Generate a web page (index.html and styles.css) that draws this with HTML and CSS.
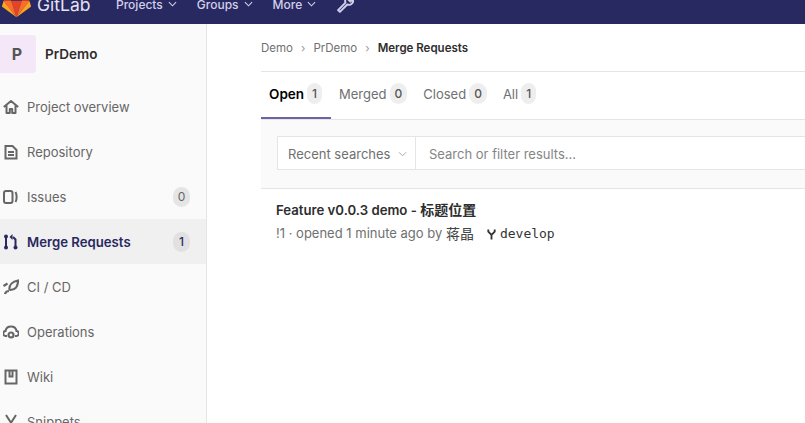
FILE: index.html
```html
<!DOCTYPE html>
<html lang="en">
<head>
<meta charset="utf-8">
<title>Merge Requests · PrDemo</title>
<link rel="stylesheet" href="styles.css">
</head>
<body>
<header class="topbar">
  <div class="topbar-inner">
    <svg class="logo" viewBox="0 0 36 34" width="29" height="28"><path fill="#e24329" d="M18 33.500 24.600 13H11.400z"/><path fill="#fc6d26" d="M18 33.500 11.400 13H2.100z"/><path fill="#fca326" d="M2.100 13 .1 19.200c-.2.600 0 1.200.5 1.600L18 33.500z"/><path fill="#e24329" d="M2.100 13h9.300L7.400.7c-.2-.6-1.100-.6-1.300 0z"/><path fill="#fc6d26" d="M18 33.500 24.600 13h9.300z"/><path fill="#fca326" d="m33.900 13 2 6.200c.2.600 0 1.200-.5 1.600L18 33.500z"/><path fill="#e24329" d="M33.900 13h-9.300l4-12.300c.2-.6 1.100-.6 1.300 0z"/></svg>
    <span class="brand">GitLab</span>
    <nav class="menu">
      <a class="menu-item">Projects<svg class="chev" viewBox="0 0 10 6" width="9" height="6"><path d="M1 1l4 4 4-4" fill="none" stroke="currentColor" stroke-width="1.200"/></svg></a>
      <a class="menu-item">Groups<svg class="chev" viewBox="0 0 10 6" width="9" height="6"><path d="M1 1l4 4 4-4" fill="none" stroke="currentColor" stroke-width="1.200"/></svg></a>
      <a class="menu-item">More<svg class="chev" viewBox="0 0 10 6" width="9" height="6"><path d="M1 1l4 4 4-4" fill="none" stroke="currentColor" stroke-width="1.200"/></svg></a>
      <svg class="wrench" viewBox="0 0 16 16" width="17" height="17"><path d="M2.700 15 1 13.300l7-7c-.7-1.800-.2-3.300.8-4.300C9.900.9 11.500.5 13 1.100L10.700 3.400l1.900 1.900L14.900 3c.6 1.500.2 3.100-.9 4.200-1 1-2.500 1.500-4.300.8z" fill="none" stroke="currentColor" stroke-width="1.800" stroke-linejoin="round"/></svg>
    </nav>
  </div>
</header>
<div class="layout">
  <aside class="sidebar">
    <div class="context">
      <div class="avatar">P</div>
      <div class="project">PrDemo</div>
    </div>
    <ul class="nav">
      <li class="nav-item"><svg class="ico" viewBox="0 0 16 16"><path d="M.8 8 8 2l7.200 6M3.500 6.500V14h3.300v-4h2.400v4h3.300V6.500" fill="none" stroke="currentColor" stroke-width="2" stroke-linejoin="round"/></svg><span>Project overview</span></li>
      <li class="nav-item"><svg class="ico" viewBox="0 0 16 16"><path d="M2.500 2h7L13.500 6v8.500h-11zM5 8h6M5 11h6" fill="none" stroke="currentColor" stroke-width="2"/></svg><span>Repository</span></li>
      <li class="nav-item"><svg class="ico" viewBox="0 0 16 16"><rect x="1" y="2" width="8.500" height="12" rx="2" fill="none" stroke="currentColor" stroke-width="2"/><path d="M12.500 3c1.500 2.500 1.500 7.500 0 10" fill="none" stroke="currentColor" stroke-width="2"/></svg><span>Issues</span><b class="count">0</b></li>
      <li class="nav-item active"><svg class="ico" viewBox="0 0 16 16"><path d="M3 3v10M12.500 13V5.500L10 3" fill="none" stroke="currentColor" stroke-width="2"/><path d="M9.500 0v6L6.500 3z" fill="currentColor"/><circle cx="3" cy="2.500" r="2" fill="currentColor"/><circle cx="3" cy="13.500" r="2" fill="currentColor"/><circle cx="12.500" cy="13.500" r="2" fill="currentColor"/></svg><span>Merge Requests</span><b class="count">1</b></li>
      <li class="nav-item"><svg class="ico" viewBox="0 0 16 16"><path d="M6.500 10.500C6 6 9.500 2.500 15 1.500c0 6-3 9.500-7.500 9.500zM.5 7 4.500 4.500M2 15c.5-2 2-3 4-3" fill="none" stroke="currentColor" stroke-width="2.200"/></svg><span>CI / CD</span></li>
      <li class="nav-item"><svg class="ico" viewBox="0 0 16 16"><path d="M4 12H3a2.500 2.500 0 0 1-.5-5C3 4 5.500 2.500 8 2.500s5 1.500 5.500 4.500a2.500 2.500 0 0 1-.5 5h-1" fill="none" stroke="currentColor" stroke-width="2"/><circle cx="8" cy="11" r="2.500" fill="none" stroke="currentColor" stroke-width="2.200"/></svg><span>Operations</span></li>
      <li class="nav-item"><svg class="ico" viewBox="0 0 16 16"><path d="M2.500 1.500h11v13h-11zM6.500 2v5.500h3V2" fill="none" stroke="currentColor" stroke-width="2"/></svg><span>Wiki</span></li>
      <li class="nav-item"><svg class="ico" viewBox="0 0 16 16"><path d="M3 1l9 14M13 1 4 15" fill="none" stroke="currentColor" stroke-width="2"/></svg><span>Snippets</span></li>
    </ul>
  </aside>
  <main class="content">
    <div class="crumbs">
      <span>Demo</span><i class="sep">›</i><span>PrDemo</span><i class="sep">›</i><strong>Merge Requests</strong>
    </div>
    <div class="tabs">
      <a class="tab current">Open <b class="pill">1</b></a>
      <a class="tab">Merged <b class="pill">0</b></a>
      <a class="tab">Closed <b class="pill">0</b></a>
      <a class="tab">All <b class="pill">1</b></a>
    </div>
    <div class="filter-band">
      <div class="filter">
        <div class="recent">Recent searches<svg class="chev-gray" viewBox="0 0 10 6" width="9" height="6"><path d="M1 1l4 4 4-4" fill="none" stroke="currentColor" stroke-width="1.100"/></svg></div>
        <div class="search">Search or filter results...</div>
      </div>
    </div>
    <div class="mr">
      <div class="mr-title">Feature v0.0.3 demo - <span class="cjk">标题位置</span></div>
      <div class="mr-meta">!1 · opened 1 minute ago by <span class="author">蒋晶</span><svg class="fork" viewBox="0 0 12 12" width="11" height="12"><path d="M2.500 1v2.500L6 7l3.500-3.500V1M6 7v5" fill="none" stroke="currentColor" stroke-width="2"/></svg><code class="ref">develop</code></div>
    </div>
  </main>
</div>
</body>
</html>
```
FILE: styles.css
```css
* { box-sizing: border-box; }
html, body { margin: 0; height: 423px; overflow: hidden; background: #fff; }
body { font-family: Inter, "Noto Sans CJK SC", sans-serif; font-size: 13px; color: #2e2e2e; display: flex; flex-direction: column; }
.topbar { height: 24px; flex: none; background: #292961; overflow: hidden; color: #d1d0ea; }
.topbar-inner { display: flex; align-items: center; height: 48px; margin-top: -20px; }
.logo { margin-left: 2px; flex: none; }
.brand { font-size: 17.500px; margin-left: 6px; color: #e4e3f2; width: 79px; }
.menu { display: flex; align-items: center; gap: 20px; }
.menu-item { display: flex; align-items: center; gap: 5px; font-size: 12px; font-weight: 500; }
.wrench { margin-left: 1px; }
.layout { display: flex; flex: 1; min-height: 0; }
.sidebar { width: 207px; flex: none; background: #fafafa; border-right: 1px solid #e5e5e5; overflow: hidden; }
.context { display: flex; align-items: center; height: 38px; margin: 11px 0 0 -4px; }
.avatar { width: 40px; height: 38px; border-radius: 3px; background: #f4e8f8; color: #555; display: flex; align-items: center; justify-content: center; font-size: 16px; font-weight: 700; padding-left: 2px; }
.project { margin-left: 9px; font-size: 13.500px; font-weight: 600; color: #2e2e2e; }
.nav { list-style: none; margin: 11px 0 0; padding: 0; }
.nav-item { display: flex; align-items: center; height: 45px; padding: 0 16px 0 3px; color: #666; font-size: 13px; }
.ico { width: 16px; height: 16px; margin-right: 8px; flex: none; }
.count { margin-left: auto; min-width: 17px; height: 20px; border-radius: 10px; background: #e5e5e5; color: #666; font-size: 12px; font-weight: 400; display: flex; align-items: center; justify-content: center; }
.active { background: #f0f0f0; color: #292961; font-weight: 600; font-size: 13.200px; }
.active .count { background: #e1e1e1; color: #292961; font-weight: 500; }
.content { flex: 1; min-width: 0; padding-left: 54px; overflow: hidden; }
.crumbs { height: 48px; border-bottom: 1px solid #e5e5e5; display: flex; align-items: center; font-size: 11.500px; color: #707070; }
.crumbs strong { color: #2e2e2e; font-weight: 600; }
.sep { font-style: normal; margin: 0 8px; color: #999; }
.tabs { display: flex; height: 48px; border-bottom: 1px solid #e5e5e5; }
.tab { display: flex; align-items: center; gap: 3px; padding: 0 8px 4px; color: #707070; font-size: 13px; height: 47px; }
.current { color: #000; font-weight: 600; font-size: 13.500px; padding: 0 9px 2px 8px; border-bottom: 2px solid #6b65a7; }
.pill { padding: 0 5px; height: 21px; border-radius: 10px; background: #eee; color: #555; font-size: 12px; font-weight: 500; display: flex; align-items: center; justify-content: center; }
.filter-band { height: 69px; background: #fafafa; border-bottom: 1px solid #e5e5e5; padding: 16px 0 0 16px; }
.filter { display: flex; height: 34px; background: #fff; border: 1px solid #e5e5e5; border-right: 0; }
.recent { width: 138px; flex: none; border-right: 1px solid #e5e5e5; display: flex; align-items: center; padding: 1px 0 0 10px; color: #707070; font-size: 13px; gap: 8px; }
.chev-gray { color: #aaa; }
.search { padding: 1px 0 0 13px; display: flex; align-items: center; color: #858585; font-size: 13px; }
.mr { padding: 12px 0 0 15px; }
.mr-title { font-size: 13.200px; font-weight: 600; color: #2e2e2e; line-height: 17px; }
.cjk { font-size: 14px; }
.mr-meta { display: flex; align-items: center; margin-top: 6px; color: #707070; font-size: 13px; line-height: 17px; white-space: pre; }
.author { color: #444; font-size: 14px; margin-right: 12px; }
.fork { color: #333; margin-right: 3px; }
.ref { font-family: "DejaVu Sans Mono", monospace; font-size: 13px; color: #333; }
```
